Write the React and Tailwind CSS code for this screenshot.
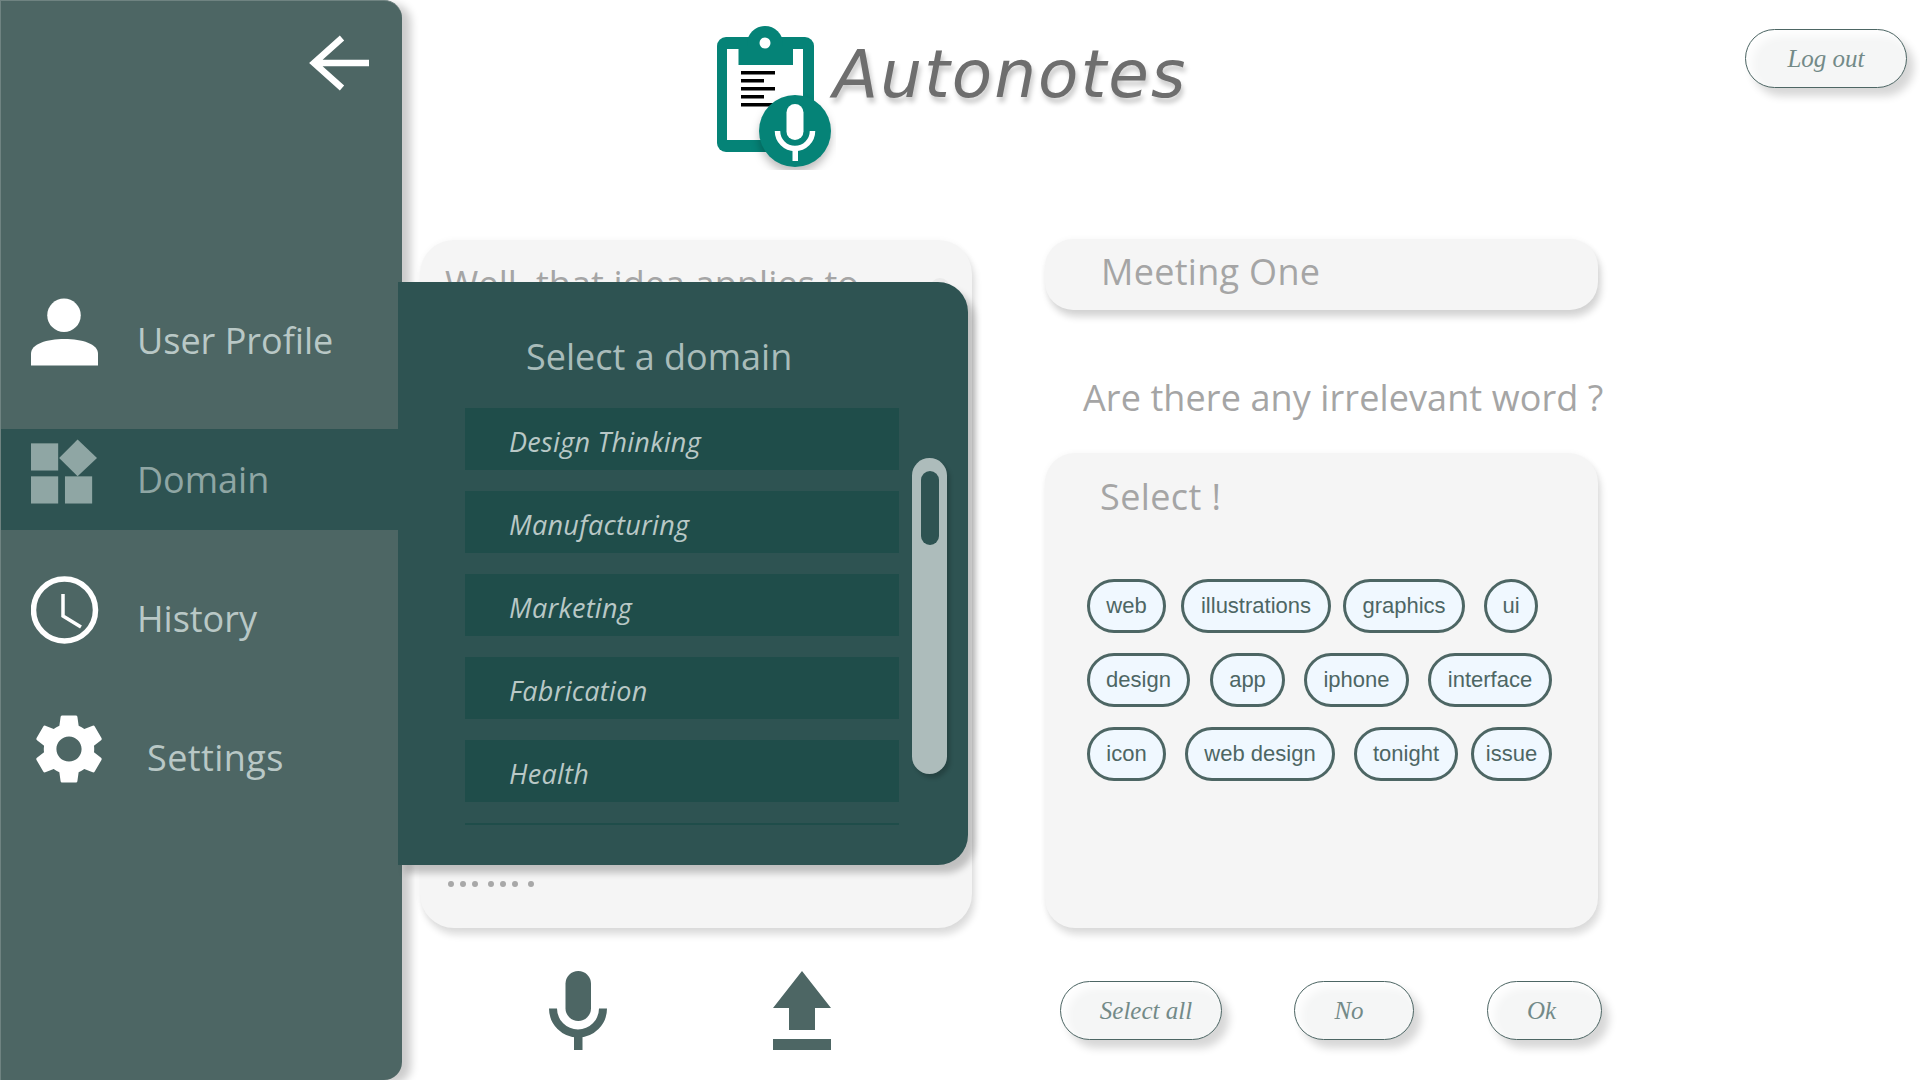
import { MdSettings } from "react-icons/md";

const uiFont = "font-['Open_Sans','Noto_Sans',sans-serif]";
const btnFont = "font-['Liberation_Serif',serif] italic";

function Logo() {
  return (
    <svg width="120" height="150" viewBox="716 20 120 150" className="shrink-0">
      <rect x="717" y="37" width="97" height="115" rx="9" fill="#058377" />
      <circle cx="765" cy="44" r="18" fill="#058377" />
      <rect x="727" y="49" width="76" height="91" fill="#fff" />
      <rect x="738.5" y="46" width="54.5" height="19" fill="#058377" />
      <circle cx="765" cy="43" r="5.5" fill="#fff" />
      <rect x="741" y="71" width="34" height="3.5" fill="#000" />
      <rect x="741" y="79" width="23" height="3.5" fill="#000" />
      <rect x="741" y="87" width="34" height="3.5" fill="#000" />
      <rect x="741" y="95" width="23" height="3.5" fill="#000" />
      <rect x="741" y="103" width="34" height="3.5" fill="#000" />
      <g className="drop-shadow-[0_6px_4px_rgba(0,0,0,0.25)]">
        <circle cx="795" cy="131" r="36" fill="#058377" />
      </g>
      <rect x="786.5" y="104" width="17" height="36" rx="8.5" fill="#fff" />
      <path d="M777.5 131a17.5 17.5 0 0 0 35 0" fill="none" stroke="#fff" strokeWidth="5.5" />
      <rect x="792.5" y="148" width="5.5" height="13" fill="#fff" />
    </svg>
  );
}

function UserIcon() {
  return (
    <svg width="67" height="68" viewBox="0 0 68 68" fill="#fff" className="shrink-0">
      <circle cx="33.5" cy="17" r="17" />
      <path d="M0 68V56C0 46 16 41 34 41s34 5 34 15v12z" />
    </svg>
  );
}

function DomainIcon() {
  return (
    <svg width="66" height="65" viewBox="0 0 68 66" fill="#8fa6a4" className="shrink-0">
      <rect x="0" y="4" width="28" height="28" />
      <rect x="0" y="38" width="28" height="28" />
      <rect x="35" y="38" width="28" height="28" />
      <path d="M48 0l20 19-20 19-19-19z" />
    </svg>
  );
}

function ClockIcon() {
  return (
    <svg width="68" height="68" viewBox="0 0 68 68" fill="none" stroke="#fff" className="shrink-0">
      <circle cx="33.5" cy="34" r="31" strokeWidth="5.5" />
      <path d="M32 18v22l18 11" strokeWidth="3.5" />
    </svg>
  );
}

function NavRow({ icon, label, active, rowClass, textClass }) {
  return (
    <div className={`flex w-[398px] ${rowClass} ${active ? "bg-[#2e5352]" : ""}`}>
      {icon}
      <span className={`${uiFont} text-[36px] leading-[48px] ${active ? "text-[#8fa6a4]" : "text-[#b9c8c6]"} ${textClass}`}>
        {label}
      </span>
    </div>
  );
}

function Sidebar() {
  return (
    <aside className="w-[402px] h-[1080px] shrink-0 rounded-r-[18px] bg-[#4d6664] border-l border-t border-[#6f8381] shadow-[9px_4px_9px_rgba(0,0,0,0.2)]">
      <div className="flex justify-end pt-[34px] pr-[33px] h-[297px]">
        <svg width="60" height="56" viewBox="0 0 60 56" fill="none" stroke="#fff" strokeWidth="6.5" className="shrink-0">
          <path d="M33 3L5 28l28 25M5 28h55" />
        </svg>
      </div>
      <NavRow rowClass="h-[131px] pl-[30px]" icon={<UserIcon />} label="User Profile" textClass="ml-[39px] mt-[19px]" />
      <NavRow active rowClass="h-[101px] pl-[30px] pt-[10px]" icon={<DomainIcon />} label="Domain" textClass="ml-[40px] mt-[17px]" />
      <NavRow rowClass="h-[139px] pl-[30px] pt-[46px]" icon={<ClockIcon />} label="History" textClass="ml-[38px] mt-[19px]" />
      <NavRow rowClass="pl-[34px] pt-[46px]" icon={<MdSettings size={84} color="#fff" className="shrink-0 -m-[8px]" />} label="Settings" textClass="ml-[44px] mt-[19px] tracking-[0.4px]" />
    </aside>
  );
}

const domains = ["Design Thinking", "Manufacturing", "Marketing", "Fabrication", "Health"];

function DomainPanel() {
  return (
    <div className="absolute left-[398px] top-[282px] w-[570px] h-[583px] rounded-r-[30px] bg-[#2e5352] shadow-[7px_8px_7px_rgba(0,0,0,0.22)] pl-[67px]">
      <h2 className={`${uiFont} text-[#a9bcba] text-[36px] leading-[48px] pl-[61px] pt-[51px] h-[126px]`}>Select a domain</h2>
      <div className="flex items-start">
        <div className="flex flex-col gap-[21px] w-[434px]">
          {domains.map((d) => (
            <div key={d} className={`${uiFont} italic h-[62px] bg-[#1f4d4a] text-[#b9c8c6] text-[27px] leading-[61px] tracking-[0.3px] pl-[44px] pt-[3px]`}>
              {d}
            </div>
          ))}
          <div className="h-[2px] bg-[#1f4d4a]" />
        </div>
        <div className="w-[35px] h-[316px] ml-[13px] mt-[50px] pt-[13px] rounded-full bg-[#adbcbb] shadow-[3px_4px_4px_rgba(0,0,0,0.2)]">
          <div className="w-[18px] h-[74px] mx-auto rounded-full bg-[#2e5352]" />
        </div>
      </div>
    </div>
  );
}

function PillButton({ label, className }) {
  return (
    <button className={`${btnFont} h-[59px] rounded-full border border-[#4d6664] bg-[#f5f6f6] text-[#738a88] text-[25px] shadow-[7px_8px_8px_rgba(0,0,0,0.16),inset_6px_6px_8px_rgba(255,255,255,0.9)] ${className}`}>
      {label}
    </button>
  );
}

const chipRows = [
  [
    ["web", "w-[79px]"],
    ["illustrations", "w-[150px] ml-[15px]"],
    ["graphics", "w-[122px] ml-[12px]"],
    ["ui", "w-[54px] ml-[19px]"],
  ],
  [
    ["design", "w-[103px]"],
    ["app", "w-[75px] ml-[20px]"],
    ["iphone", "w-[105px] ml-[19px]"],
    ["interface", "w-[124px] ml-[19px]"],
  ],
  [
    ["icon", "w-[79px]"],
    ["web design", "w-[150px] ml-[19px]"],
    ["tonight", "w-[104px] ml-[19px]"],
    ["issue", "w-[81px] ml-[13px]"],
  ],
];

const dotGaps = ["", "ml-[6px]", "ml-[6px]", "ml-[10px]", "ml-[6px]", "ml-[6px]", "ml-[10px]"];

export default function App() {
  return (
    <div className="relative flex w-[1920px] h-[1080px] overflow-hidden bg-white">
      <Sidebar />
      <main className="flex-1 pl-[18px]">
        {/* Logo and logout */}
        <header className="flex h-[239px] items-start">
          <div className="flex items-start ml-[296px] mt-[20px]">
            <Logo />
            <span className="font-['DejaVu_Sans',sans-serif] italic text-[#6e6e6e] text-[66px] leading-[90px] tracking-[2px] -ml-[3px] mt-[10px] [text-shadow:2px_5px_5px_rgba(0,0,0,0.22)]">
              Autonotes
            </span>
          </div>
          <PillButton label="Log out" className="w-[162px] ml-auto mr-[13px] mt-[29px]" />
        </header>

        <div className="flex">
          {/* Transcript column */}
          <div className="w-[552px]">
            <div className={`${uiFont} mt-[1px] h-[688px] rounded-[34px] bg-[#f5f5f5] shadow-[3px_7px_7px_rgba(0,0,0,0.13),0_0_6px_rgba(0,0,0,0.04)] px-[25px] pt-[20px] flex flex-col`}>
              <div className="flex justify-between">
                <span className="text-[#a5a5a5] text-[36px] leading-[48px] tracking-[0.1px]">Well, that idea applies to</span>
                <span className="w-[20px] h-[40px] rounded-full bg-[#ebebeb] mt-[18px] -mr-[3px]" />
              </div>
              <div className="flex items-center mt-auto mb-[41px] pl-[3px]">
                {dotGaps.map((gap, i) => (
                  <span key={i} className={`w-[6px] h-[6px] rounded-full bg-[#a8a8a8] ${gap}`} />
                ))}
              </div>
            </div>
            <div className="flex mt-[43px] pl-[129px]">
              <svg width="58" height="79" viewBox="0 0 58 79" fill="#4d6664" className="shrink-0">
                <rect x="16.5" y="0" width="25.5" height="50" rx="12.75" />
                <path d="M4 37.5a25 25 0 0 0 50 0" fill="none" stroke="#4d6664" strokeWidth="8" />
                <rect x="25" y="62" width="8.5" height="17" />
              </svg>
              <svg width="58" height="79" viewBox="0 0 58 79" fill="#4d6664" className="shrink-0 ml-[166px]">
                <path d="M29 0l29 37H42v22H16V37H0z" />
                <rect x="0" y="68" width="58" height="11" />
              </svg>
            </div>
          </div>

          {/* Word selection column */}
          <div className="w-[557px] ml-[73px]">
            <div className={`${uiFont} h-[71px] w-[553px] rounded-[28px] bg-[#f5f5f5] shadow-[3px_7px_7px_rgba(0,0,0,0.16),0_0_6px_rgba(0,0,0,0.04)] text-[#a5a5a5] text-[36px] leading-[66px] tracking-[0.3px] pl-[56px]`}>
              Meeting One
            </div>
            <p className={`${uiFont} text-[#a5a5a5] text-[36px] leading-[48px] tracking-[0.1px] mt-[64px] ml-[38px] whitespace-nowrap`}>
              Are there any irrelevant word ?
            </p>
            <div className="mt-[31px] h-[475px] w-[553px] rounded-[30px] bg-[#f5f5f5] shadow-[3px_7px_7px_rgba(0,0,0,0.13),0_0_6px_rgba(0,0,0,0.04)] pl-[42px]">
              <div className={`${uiFont} text-[#a5a5a5] text-[36px] leading-[48px] tracking-[0.4px] pl-[13px] pt-[20px] h-[126px]`}>Select !</div>
              <div className="flex flex-col gap-[20px]">
                {chipRows.map((row, i) => (
                  <div key={i} className="flex">
                    {row.map(([word, size]) => (
                      <span key={word} className={`font-['Liberation_Sans',sans-serif] flex items-center justify-center h-[54px] pb-[2px] rounded-full border-[3px] border-[#4d6664] bg-[#f0f8ff] text-[#4d6664] text-[22px] ${size}`}>
                        {word}
                      </span>
                    ))}
                  </div>
                ))}
              </div>
            </div>
            <div className="flex mt-[53px] ml-[15px]">
              <PillButton label="Select all" className="w-[162px] pl-[10px]" />
              <PillButton label="No" className="w-[120px] ml-[72px] pr-[10px]" />
              <PillButton label="Ok" className="w-[115px] ml-[73px] pr-[6px]" />
            </div>
          </div>
        </div>
      </main>
      <DomainPanel />
    </div>
  );
}
